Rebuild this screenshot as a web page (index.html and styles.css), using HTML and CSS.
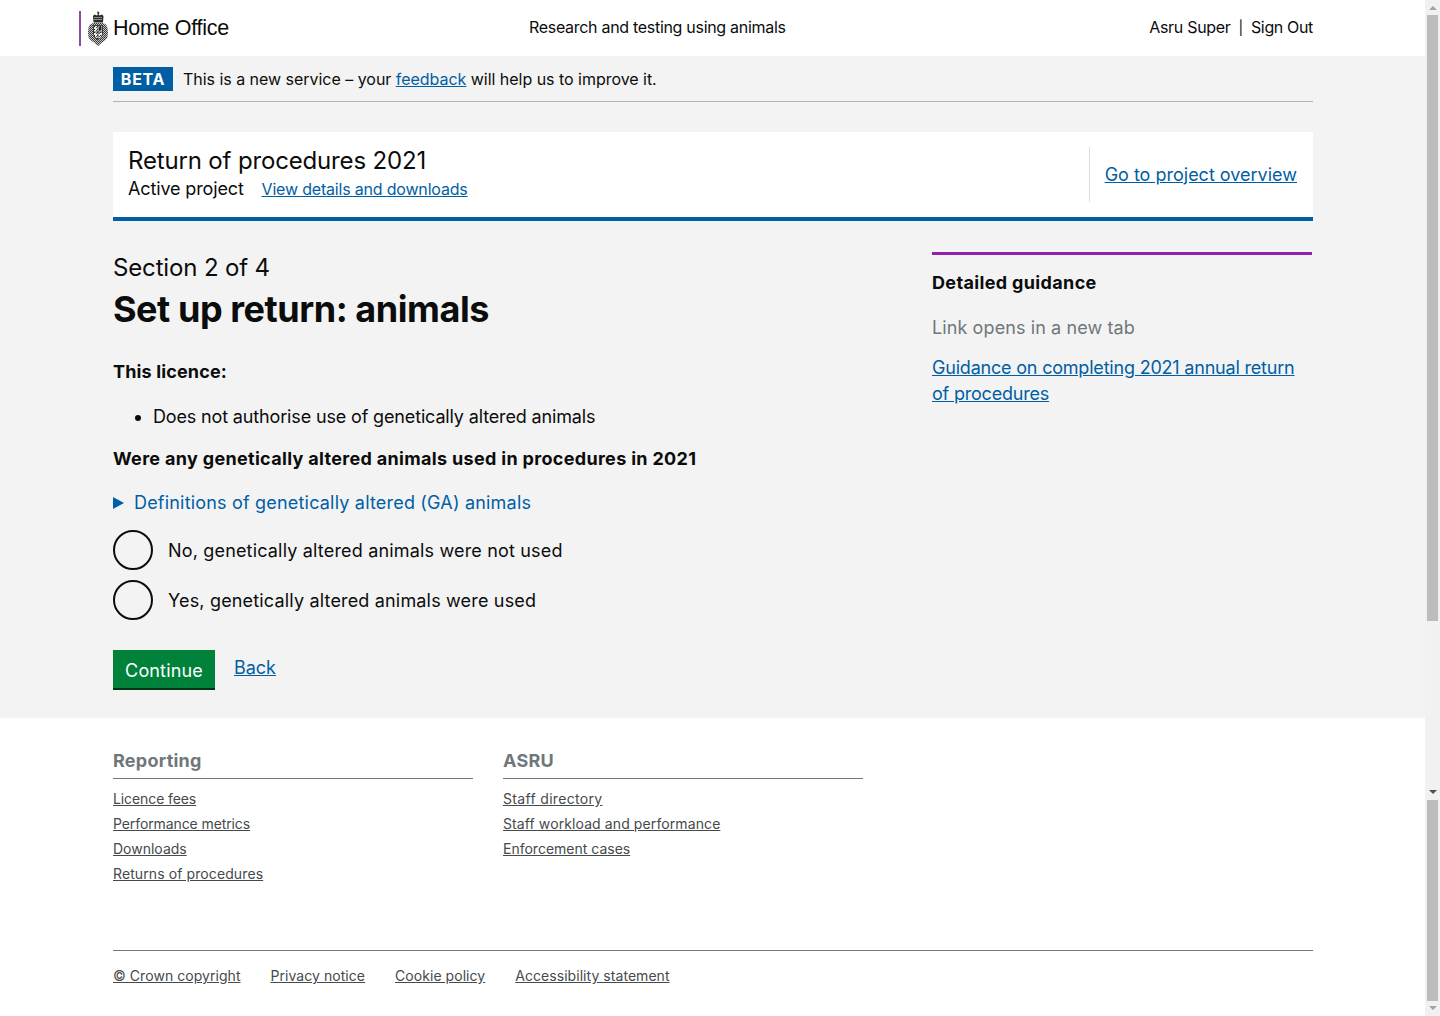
FILE: index.html
```html
<!DOCTYPE html>
<html lang="en">
<head>
    <meta charset="UTF-8">
    <meta name="viewport" content="width=device-width, initial-scale=1.0">
    <title>Research and testing using animals</title>
    <link rel="stylesheet" href="styles.css">
</head>
<body>
<div class="window">
    <div class="page">
        <header class="site-header">
            <a class="logo" href="#">
                <svg class="crest" width="20" height="35" viewBox="0 0 20 35">
                    <defs>
                        <pattern id="dither" width="2" height="2" patternUnits="userSpaceOnUse">
                            <rect width="2" height="2" fill="#c4c4c4"/>
                            <rect width="1" height="1" fill="#333"/>
                            <rect x="1" y="1" width="1" height="1" fill="#444"/>
                        </pattern>
                        <pattern id="shieldfill" width="3" height="3" patternUnits="userSpaceOnUse">
                            <rect width="3" height="3" fill="#eee"/>
                            <rect width="1" height="1" fill="#222"/>
                            <rect x="2" y="1" width="1" height="1" fill="#555"/>
                        </pattern>
                    </defs>
                    <path d="M10 0l1.500 2-1 1 1 1.500 2.500-1 1.500 1.500-.5 6.500H5.500L5 5l1.500-1.500 2.500 1 1-1.500-1-1z" fill="#2b2b2b"/>
                    <path d="M6 8.500h8M6 6.500h8" stroke="#aaa" stroke-width=".8" fill="none"/>
                    <path d="M5 12h10l3 1.500 1.500 3 .5 5-.5 5-2.500 3-3 2-2 2-2 1.500-2-1.500-2-2-3-2-2.500-3-.5-5 .5-5 1.500-3z" fill="url(#dither)"/>
                    <path d="M5.500 14.500h9v9l-1.500 3-3 2-3-2-1.500-3z" fill="url(#shieldfill)" stroke="#222" stroke-width=".8"/>
                    <path d="M10 14.500v14M5.500 21h9" stroke="#222" stroke-width=".8" fill="none"/>
                    <rect x="11" y="15.500" width="2.500" height="4" fill="#222"/>
                </svg>
                <span class="logo-text">Home Office</span>
            </a>
            <div class="service-name">Research and testing using animals</div>
            <div class="user-nav">Asru Super<span class="sep">|</span><span class="sign-out">Sign Out</span></div>
        </header>

        <div class="container">
            <div class="beta-bar">
                <span class="beta-tag">BETA</span>
                <span class="beta-text">This is a new service – your <a href="#">feedback</a> will help us to improve it.</span>
            </div>

            <div class="project-panel">
                <div class="project-info">
                    <div class="project-title">Return of procedures 2021</div>
                    <div class="project-status">
                        <span>Active project</span>
                        <a href="#">View details and downloads</a>
                    </div>
                </div>
                <div class="project-link"><a href="#">Go to project overview</a></div>
            </div>

            <div class="columns">
                <main class="main-col">
                    <div class="section-count">Section 2 of 4</div>
                    <h1>Set up return: animals</h1>
                    <p class="bold licence-label">This licence:</p>
                    <ul class="licence-list">
                        <li>Does not authorise use of genetically altered animals</li>
                    </ul>
                    <p class="bold question">Were any genetically altered animals used in procedures in 2021</p>
                    <div class="details-toggle">
                        <span class="triangle"></span>
                        <span>Definitions of genetically altered (GA) animals</span>
                    </div>
                    <label class="radio"><span class="radio-circle"></span><span class="radio-label">No, genetically altered animals were not used</span></label>
                    <label class="radio"><span class="radio-circle"></span><span class="radio-label">Yes, genetically altered animals were used</span></label>
                    <div class="actions">
                        <button class="continue">Continue</button>
                        <a href="#" class="back">Back</a>
                    </div>
                </main>
                <aside class="sidebar">
                    <h2>Detailed guidance</h2>
                    <p class="hint">Link opens in a new tab</p>
                    <p class="guide-link"><a href="#">Guidance on completing 2021 annual return of procedures</a></p>
                </aside>
            </div>
        </div>

        <footer class="site-footer">
            <div class="footer-inner">
                <div class="footer-cols">
                    <div class="footer-col">
                        <h3>Reporting</h3>
                        <a href="#" class="tight">Licence fees</a>
                        <a href="#" class="tight">Performance metrics</a>
                        <a href="#">Downloads</a>
                        <a href="#" class="wide">Returns of procedures</a>
                    </div>
                    <div class="footer-col">
                        <h3>ASRU</h3>
                        <a href="#" class="wider">Staff directory</a>
                        <a href="#" class="wide">Staff workload and performance</a>
                        <a href="#">Enforcement cases</a>
                    </div>
                </div>
                <div class="footer-meta">
                    <a href="#">© Crown copyright</a>
                    <a href="#">Privacy notice</a>
                    <a href="#">Cookie policy</a>
                    <a href="#">Accessibility statement</a>
                </div>
            </div>
        </footer>
    </div>

    <div class="scrollbar">
        <span class="arrow up"></span>
        <span class="thumb thumb-top"></span>
        <span class="gap"></span>
        <span class="arrow down dark"></span>
        <span class="thumb thumb-bottom"></span>
        <span class="arrow down"></span>
    </div>
</div>
</body>
</html>
```

FILE: styles.css
```css
html, body {
    margin: 0;
    height: 100%;
    overflow: hidden;
}
body {
    font-family: Inter, "Liberation Sans", sans-serif;
    font-size: 18px;
    line-height: 26px;
    color: #0b0c0c;
    background-color: #fff;
}
a {
    color: #005ea5;
}
.window {
    display: flex;
    height: 1016px;
}
.page {
    width: 1425px;
    background-color: #f3f3f3;
}

/* header */
.site-header {
    display: grid;
    grid-template-columns: 450px 1fr 300px;
    align-items: center;
    height: 56px;
    padding: 0 112px 0 79px;
    background-color: #fff;
    font-size: 16px;
}
.logo {
    display: flex;
    align-items: center;
    height: 35px;
    padding-left: 7px;
    border-left: 2px solid #8f4aa3;
    color: #0b0c0c;
    text-decoration: none;
}
.crest {
    margin-right: 5px;
}
.logo-text {
    font-family: "Liberation Sans", Arial, sans-serif;
    font-size: 21.5px;
    letter-spacing: -0.3px;
}
.service-name {
    margin-bottom: 2px;
    letter-spacing: -0.3px;
}
.user-nav {
    margin-bottom: 2px;
    text-align: right;
    letter-spacing: -0.3px;
}
.sep {
    margin: 0 8px;
    font-size: 14px;
}
.sign-out {
    letter-spacing: -0.35px;
}

.container {
    width: 1200px;
    margin-left: 113px;
}

/* beta banner */
.beta-bar {
    display: flex;
    align-items: center;
    height: 45px;
    border-bottom: 1px solid #b1b4b6;
    font-size: 16px;
}
.beta-tag {
    width: 60px;
    margin-right: 10px;
    background-color: #005ea5;
    color: #fff;
    font-weight: 700;
    letter-spacing: 0.7px;
    text-align: center;
    line-height: 24px;
}
.beta-text {
    letter-spacing: -0.03px;
}

/* project panel */
.project-panel {
    display: flex;
    justify-content: space-between;
    align-items: center;
    height: 85px;
    margin-top: 30px;
    padding: 0 16px 0 15px;
    background-color: #fff;
    border-bottom: 4px solid #005ea5;
}
.project-info {
    padding-bottom: 2px;
}
.project-title {
    margin-top: 1px;
    font-size: 24px;
    line-height: 30px;
    letter-spacing: -0.16px;
}
.project-status {
    margin-top: -1px;
    font-size: 18px;
    line-height: 28px;
    letter-spacing: -0.14px;
}
.project-status a {
    margin-left: 13px;
    font-size: 16px;
    letter-spacing: -0.19px;
}
.project-link {
    display: flex;
    align-items: center;
    height: 55px;
    padding-left: 15px;
    border-left: 1px solid #dcdcdc;
}

/* main content */
.columns {
    display: flex;
    justify-content: space-between;
    padding-top: 31px;
    height: 466px;
}
.main-col {
    width: 780px;
}
.section-count {
    margin-top: 1px;
    font-size: 24px;
    line-height: 30px;
    letter-spacing: -0.15px;
}
h1 {
    margin: 4px 0 0;
    font-size: 36px;
    line-height: 44px;
    font-weight: 700;
    letter-spacing: -0.45px;
}
.bold {
    font-weight: 700;
}
p {
    margin: 0;
}
.licence-label {
    margin-top: 28px;
    letter-spacing: 0.15px;
}
.licence-list {
    margin: 19px 0 0;
    padding-left: 40px;
    letter-spacing: -0.15px;
}
.question {
    margin-top: 16px;
    letter-spacing: 0.32px;
}
.details-toggle {
    display: flex;
    align-items: center;
    margin-top: 18px;
    color: #005ea5;
    letter-spacing: 0.19px;
}
.triangle {
    width: 0;
    height: 0;
    margin-right: 10px;
    border-left: 11px solid #005ea5;
    border-top: 6.5px solid transparent;
    border-bottom: 6.5px solid transparent;
}
.radio {
    display: flex;
    align-items: center;
    margin-top: 10px;
    height: 40px;
    letter-spacing: 0.17px;
}
.radio-label {
    padding-top: 2px;
}
.details-toggle + .radio {
    margin-top: 14px;
}
.radio-circle {
    box-sizing: border-box;
    width: 40px;
    height: 40px;
    margin-right: 15px;
    border: 2px solid #0b0c0c;
    border-radius: 50%;
}
.actions {
    display: flex;
    align-items: flex-start;
    margin-top: 30px;
}
.continue {
    width: 102px;
    height: 40px;
    padding: 2px 0 0;
    border: none;
    border-bottom: 2px solid #003618;
    background-color: #00823b;
    color: #fff;
    font-family: inherit;
    font-size: 18px;
    letter-spacing: 0.15px;
}
.back {
    margin-left: 19px;
    font-size: 18px;
    line-height: 36px;
    letter-spacing: -0.05px;
}

/* sidebar */
.sidebar {
    width: 380px;
    margin-right: 1px;
    border-top: 3px solid #9120ae;
}
.sidebar h2 {
    margin: 15px 0 0;
    font-size: 18px;
    line-height: 26px;
    letter-spacing: 0.35px;
}
.hint {
    margin-top: 19px;
    color: #6f777b;
    letter-spacing: 0.1px;
}
.guide-link {
    margin-top: 14px;
    letter-spacing: -0.2px;
}

/* footer */
.site-footer {
    height: 298px;
    background-color: #fff;
    font-size: 14px;
}
.footer-inner {
    width: 1200px;
    margin-left: 113px;
    padding-top: 29px;
}
.footer-cols {
    display: flex;
    gap: 30px;
    height: 203px;
    border-bottom: 1px solid #6f777b;
}
.footer-col {
    width: 360px;
}
.footer-col h3 {
    margin: 0 0 7px;
    padding-bottom: 4px;
    border-bottom: 1px solid #6f777b;
    color: #6f777b;
    font-size: 18px;
    line-height: 27px;
    letter-spacing: 0.25px;
}
.footer-col a {
    display: block;
    color: #454a4c;
    line-height: 25px;
}
.footer-col a.tight {
    letter-spacing: -0.1px;
}
.footer-col a.wide {
    letter-spacing: 0.1px;
}
.footer-col a.wider {
    letter-spacing: 0.33px;
}
.footer-meta {
    display: flex;
    gap: 30px;
    padding-top: 12px;
}
.footer-meta a {
    color: #454a4c;
    line-height: 25px;
    letter-spacing: 0.05px;
}

/* scrollbar */
.scrollbar {
    display: flex;
    flex-direction: column;
    align-items: center;
    width: 15px;
    background-color: #f1f1f1;
}
.arrow {
    width: 0;
    height: 0;
    border-left: 4px solid transparent;
    border-right: 4px solid transparent;
}
.arrow.up {
    margin: 6px 0 5px;
    border-bottom: 4px solid #a3a3a3;
}
.arrow.down {
    margin: 5px 0 6px;
    border-top: 4px solid #a3a3a3;
}
.arrow.dark {
    margin-top: 0;
    border-top-color: #505050;
}
.thumb {
    flex: none;
    width: 11px;
    background-color: #bcbcbc;
}
.thumb-top {
    height: 606px;
}
.gap {
    flex: 1;
}
.thumb-bottom {
    height: 201px;
}
```
